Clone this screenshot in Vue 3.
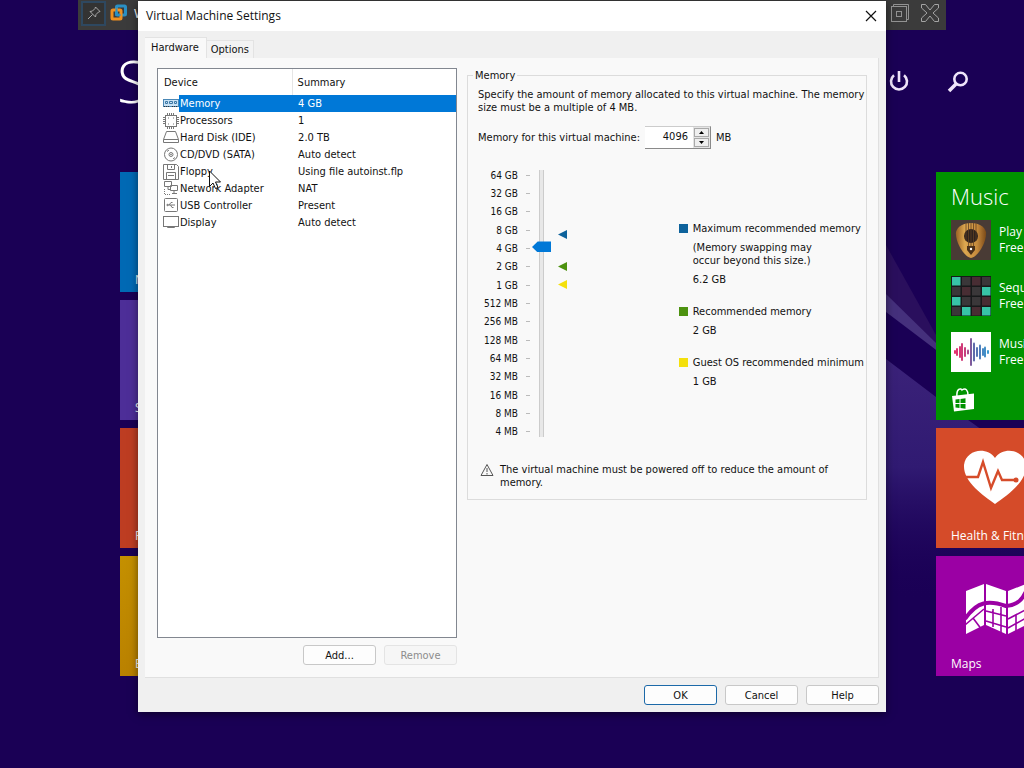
<script setup>
import { ref, computed } from 'vue'

const devices = [
  { id: 'memory', name: 'Memory', summary: '4 GB' },
  { id: 'cpu', name: 'Processors', summary: '1' },
  { id: 'disk', name: 'Hard Disk (IDE)', summary: '2.0 TB' },
  { id: 'cd', name: 'CD/DVD (SATA)', summary: 'Auto detect' },
  { id: 'floppy', name: 'Floppy', summary: 'Using file autoinst.flp' },
  { id: 'net', name: 'Network Adapter', summary: 'NAT' },
  { id: 'usb', name: 'USB Controller', summary: 'Present' },
  { id: 'display', name: 'Display', summary: 'Auto detect' },
]
const selected = ref('memory')

const scale = ['64 GB', '32 GB', '16 GB', '8 GB', '4 GB', '2 GB', '1 GB', '512 MB', '256 MB', '128 MB', '64 MB', '32 MB', '16 MB', '8 MB', '4 MB']

// Slider levels are powers of two in megabytes: 2 is 4 MB, 16 is 64 GB.
const level = ref(12)
const memory = computed({
  get: () => 2 ** level.value,
  set: (v) => { if (v >= 4) level.value = Math.log2(v) },
})
const step = (d) => { level.value = Math.min(16, Math.max(2, level.value + d)) }

const marks = [
  { color: 'blue', level: 12.73, title: 'Maximum recommended memory', note: '(Memory swapping may occur beyond this size.)', value: '6.2 GB' },
  { color: 'green', level: 11, title: 'Recommended memory', value: '2 GB' },
  { color: 'yellow', level: 10, title: 'Guest OS recommended minimum', value: '1 GB' },
]
const markTop = (m) => ({ top: `${((16 - m.level) / 14) * 100}%` })

const leftTiles = [
  { label: 'N', tone: 'sky' },
  { label: 'S', tone: 'violet' },
  { label: 'F', tone: 'red' },
  { label: 'E', tone: 'gold' },
]
const seqOn = [0, 7, 8, 13, 15]
const bars = [[3, 4], [5, 8], [8, 12], [10, 18], [13, 10], [16, 5], [19, 28], [22, 19], [25, 10], [28, 15], [31, 8], [33, 11], [36, 4]]
</script>

<template>
  <div class="desktop">
    <svg class="rays" viewBox="0 0 138 768" preserveAspectRatio="none" aria-hidden="true">
      <defs>
        <linearGradient id="ray" x1="0" y1="0" x2="0" y2="1">
          <stop offset="0" stop-color="#3b2279" />
          <stop offset="0.45" stop-color="#301a72" />
          <stop offset="1" stop-color="#1b0057" stop-opacity="0" />
        </linearGradient>
      </defs>
      <path d="M0 245 L50 335 L50 350 L0 300Z" fill="#2a0f5d" />
      <path d="M0 294 L50 343 L70 365 L0 312Z" fill="#45307c" />
      <path d="M0 359 L50 397 L138 460 L138 600 L0 600Z" fill="url(#ray)" />
    </svg>

    <header class="vm-bar">
      <button class="pin" aria-label="Pin">
        <svg width="16" height="16" viewBox="0 0 16 16" fill="none" stroke="#aaa"><path d="M9.500 2 L14 6.500 L12.500 7 L10 9.500 L9.500 12 L4 6.500 L6.500 6 L9 3.500Z M6.500 9.500 L2 14" /></svg>
      </button>
      <svg class="vm-logo" width="18" height="18" viewBox="0 0 18 18" fill="none" stroke-width="3">
        <rect x="6.500" y="2" width="9" height="9" rx="1" stroke="#2a90c4" />
        <rect x="2" y="6" width="9" height="9" rx="1" stroke="#f09020" />
        <path d="M6.500 4.500v6.500h4" stroke="#2a90c4" stroke-width="2" />
      </svg>
      <span class="vm-name">W</span>
      <span class="grow"></span>
      <button aria-label="Restore"><svg width="20" height="20" viewBox="0 0 20 20" fill="none" stroke="#929292"><path d="M3.500 3.500V1.500H18.500V16.500H16.500" /><rect x="1.500" y="3.500" width="15" height="15" /><rect x="6.500" y="8.500" width="5" height="5" /></svg></button>
      <button aria-label="Close console"><svg width="20" height="20" viewBox="0 0 20 20" fill="none" stroke="#a4a4a4"><path d="M1.500 1.500H5.500L10 7 L14.500 1.500H18.500V5L13 10 L18.500 15V18.500H14.500L10 13 L5.500 18.500H1.500V15L7 10 L1.500 5Z" /></svg></button>
    </header>

    <h1 class="start">S</h1>
    <nav class="start-tools">
      <button aria-label="Power"><svg width="22" height="24" viewBox="0 0 22 24" fill="none" stroke="#efe4fa" stroke-width="2.600"><path d="M6 5.200A8 8 0 1 0 16 5.200M11 1V12" /></svg></button>
      <button aria-label="Search"><svg width="22" height="24" viewBox="0 0 22 24" fill="none" stroke="#efe4fa" stroke-width="2.600"><circle cx="13.500" cy="9" r="6.200" /><path d="M9 14L2 21" stroke-width="3.500" /></svg></button>
    </nav>

    <div class="tiles">
      <div class="tile-col">
        <a v-for="t in leftTiles" :key="t.label" href="#" class="tile" :class="t.tone">{{ t.label }}</a>
      </div>
      <div class="tile-col right">
        <section class="tile music">
          <h2>Music</h2>
          <a class="song" href="#">
            <svg width="40" height="40" viewBox="0 0 40 40">
              <defs><linearGradient id="wood"><stop stop-color="#9a6225" /><stop offset=".3" stop-color="#dda850" /><stop offset=".7" stop-color="#c58a3c" /><stop offset="1" stop-color="#7b4a18" /></linearGradient></defs>
              <rect width="40" height="40" fill="#493b35" />
              <path d="M5 12C8 0 32 0 35 12C36 22 27 37 20 38C13 37 4 22 5 12Z" fill="url(#wood)" />
              <circle cx="20" cy="16" r="7" fill="#2e221d" />
              <path d="M15 3V21M17.500 3V26M20 3V28M22.500 3V26M25 3V21" stroke="#604022" stroke-width=".8" />
              <path d="M16 26h8v4l-4 5l-4-5z" fill="#493018" /><circle cx="20" cy="29" r="1.200" fill="#fff" />
            </svg>
            <span>Play<br>Free</span>
          </a>
          <a class="song" href="#">
            <svg width="40" height="40" viewBox="0 0 40 40">
              <rect width="40" height="40" fill="#17191a" />
              <rect v-for="n in 16" :key="n" :x="((n - 1) % 4) * 10 + 1" :y="Math.floor((n - 1) / 4) * 10 + 1" width="8.500" height="8.500" :fill="seqOn.includes(n - 1) ? '#37c3a6' : n % 3 ? '#3a3739' : '#482d33'" />
            </svg>
            <span>Sequ<br>Free</span>
          </a>
          <a class="song" href="#">
            <svg width="40" height="40" viewBox="0 0 40 40">
              <defs><linearGradient id="wave" gradientUnits="userSpaceOnUse" x1="0" y1="0" x2="40" y2="0"><stop stop-color="#f02c68" /><stop offset=".38" stop-color="#c4407f" /><stop offset=".55" stop-color="#6167a8" /><stop offset="1" stop-color="#35a3d7" /></linearGradient></defs>
              <rect width="40" height="40" fill="#fff" />
              <rect v-for="b in bars" :key="b[0]" :x="b[0]" :y="20 - b[1] / 2" width="2" :height="b[1]" rx="1" fill="url(#wave)" />
            </svg>
            <span>Musi<br>Free</span>
          </a>
          <svg class="store" width="24" height="26" viewBox="0 0 24 26">
            <path d="M6 9C5 0 10 0 11 2C15 -1 17 3 17 7" fill="none" stroke="#fff" stroke-width="1.500" />
            <path d="M1 8L23 5.500V21L3 23.500Z" fill="#fff" />
            <path d="M4.500 11.500L8.500 11V15H4.500ZM9.500 10.900L14.500 10.300V15H9.500ZM4.500 16H8.500V20L4.500 19.500ZM9.500 16H14.500V20.700L9.500 20.100Z" fill="#009300" />
          </svg>
        </section>
        <a href="#" class="tile health">
          <svg width="66" height="56" viewBox="0 0 66 56">
            <path d="M32 55C20 46 0 33 1 16C3 0 24-3 32 9C40-3 61 0 63 16C64 33 44 46 32 55Z" fill="#fff" />
            <path d="M1 28H15L20 13L28 39L35 22L39 31H52" fill="none" stroke="#d64c2a" stroke-width="2.400" /><circle cx="53" cy="31" r="2.500" fill="#d64c2a" />
          </svg>
          <span>Health &amp; Fitness</span>
        </a>
        <a href="#" class="tile maps">
          <svg width="84" height="52" viewBox="0 0 84 52">
            <path d="M1 8L19 1V42L1 51ZM21 1L41 8V51L21 42ZM43 8L61 1V42L43 51ZM63 1L83 8V51L63 42Z" fill="#fff" />
            <g fill="none" stroke="#9b00a4"><path d="M0 36C12 18 24 17 41 23C53 22 58 16 62 6" stroke-width="4" /><path d="M0 42L19 26M8 35L17 47M21 28L41 33M21 38L41 44M36 24V50M28 26V44M43 36L62 26M43 45L61 35M51 32V48" stroke-width="1.600" /></g>
          </svg>
          <span>Maps</span>
        </a>
      </div>
    </div>

    <main class="window" role="dialog" aria-labelledby="dlg-title">
      <div class="titlebar">
        <h2 id="dlg-title">Virtual Machine Settings</h2>
        <button aria-label="Close"><svg width="12" height="12" viewBox="0 0 12 12" fill="none" stroke="#111" stroke-width="1.200"><path d="M1 1L11 11M11 1L1 11" /></svg></button>
      </div>
      <div class="body">
        <div class="tabs" role="tablist">
          <button role="tab" aria-selected="true" class="tab active">Hardware</button>
          <button role="tab" aria-selected="false" class="tab">Options</button>
        </div>
        <div class="page">
          <section class="left">
            <div class="list">
              <table>
                <thead><tr><th class="dev">Device</th><th>Summary</th></tr></thead>
                <tbody>
                  <tr v-for="d in devices" :key="d.id" :class="{ selected: selected === d.id }" @click="selected = d.id">
                    <td>
                      <div class="cell">
                        <svg class="icon" width="16" height="16" viewBox="0 0 16 16" fill="none" stroke="#777">
                          <template v-if="d.id === 'memory'"><rect x=".5" y="3.500" width="15" height="7" fill="#c8e2f5" stroke="#4a87b5" /><path d="M2.500 5.500h2v2h-2zM6.500 5.500h3v2h-3zM11.500 5.500h2v2h-2z" stroke="#3c78a6" /><path d="M1 10.500H7M9 10.500H15" stroke="#333" stroke-dasharray="1 1" /></template>
                          <template v-else-if="d.id === 'cpu'"><rect x="2.500" y="2.500" width="11" height="11" /><path d="M4.500 0v2M6.500 0v2M8.500 0v2M10.500 0v2M4.500 14v2M6.500 14v2M8.500 14v2M10.500 14v2M0 4.500h2M0 6.500h2M0 8.500h2M0 10.500h2M14 4.500h2M14 6.500h2M14 8.500h2M14 10.500h2" /><path d="M5 5h1M10 5h1M5 11h1M10 11h1" /></template>
                          <template v-else-if="d.id === 'disk'"><path d="M3.500 1.500H12.500L15.500 9.500V12.500H.5V9.500ZM.5 9.500H15.500" /></template>
                          <template v-else-if="d.id === 'cd'"><circle cx="8" cy="7.500" r="6.500" /><circle cx="8" cy="7.500" r="2" /><circle cx="8" cy="7.500" r=".5" /><path d="M4 4.500L6 3M10 12L12 10.500" /></template>
                          <template v-else-if="d.id === 'floppy'"><path d="M.5.5H13.500L15.500 2.500V15.500H.5ZM4.500.5V5.500H11.500V.5M8.500 2V4M3.500 15.500V8.500H12.500V15.500M5 11.500H11" /></template>
                          <template v-else-if="d.id === 'net'"><path d="M1.500.5H8.500V5.500H1.500ZM7.500 4.500H14.500V9.500H7.500ZM5 6V8.500H7M11 10V12.500M9 12.500H14" /><path d="M1.500 8V13.500H8" stroke-dasharray="1 1" /></template>
                          <template v-else-if="d.id === 'usb'"><rect x="1.500" y=".5" width="13" height="13" rx="1" /><path d="M4 7H12M6 7L8 4.500H9.500M7.500 7L9 9.500H10.500" /><circle cx="4.500" cy="7" r=".7" /></template>
                          <template v-else><rect x=".5" y="1.500" width="15" height="10" /><path d="M4.500 12V12.500H11.500V12" /></template>
                        </svg>
                        <span>{{ d.name }}</span>
                      </div>
                    </td>
                    <td class="sum">{{ d.summary }}</td>
                  </tr>
                </tbody>
              </table>
            </div>
            <div class="actions">
              <button class="btn">Add...</button>
              <button class="btn" disabled>Remove</button>
            </div>
          </section>

          <fieldset class="memory">
            <legend>Memory</legend>
            <p>Specify the amount of memory allocated to this virtual machine. The memory size must be a multiple of 4 MB.</p>
            <div class="amount">
              <label for="mem">Memory for this virtual machine:</label>
              <div class="spin">
                <input id="mem" v-model.number="memory" type="text">
                <div class="spin-btns">
                  <button aria-label="Increase" @click="step(1)"><svg width="5" height="3" viewBox="0 0 5 3"><path d="M0 3L2.500 0L5 3Z" /></svg></button>
                  <button aria-label="Decrease" @click="step(-1)"><svg width="5" height="3" viewBox="0 0 5 3"><path d="M0 0L2.500 3L5 0Z" /></svg></button>
                </div>
              </div>
              <span>MB</span>
            </div>
            <div class="chart">
              <ol class="scale"><li v-for="s in scale" :key="s">{{ s }}</li></ol>
              <input v-model.number="level" class="slider" type="range" min="2" max="16" aria-label="Memory size">
              <div class="markers">
                <svg v-for="m in marks" :key="m.color" :class="m.color" :style="markTop(m)" width="9" height="9" viewBox="0 0 9 9"><path d="M0 4.500L9 0V9Z" fill="currentColor" /></svg>
              </div>
              <dl class="legend">
                <div v-for="m in marks" :key="m.color">
                  <dt><i :class="m.color"></i>{{ m.title }}</dt>
                  <dd v-if="m.note" class="note">{{ m.note }}</dd>
                  <dd>{{ m.value }}</dd>
                </div>
              </dl>
            </div>
            <div class="warning">
              <svg width="14" height="14" viewBox="0 0 14 14" fill="none" stroke="#555"><path d="M7 1.500L13 12.500H1Z" /><path d="M7 5V9M7 10V11.500" /></svg>
              <p>The virtual machine must be powered off to reduce the amount of memory.</p>
            </div>
          </fieldset>
        </div>
        <footer>
          <button class="btn primary">OK</button>
          <button class="btn">Cancel</button>
          <button class="btn">Help</button>
        </footer>
      </div>
    </main>

    <svg class="cursor" width="12" height="20" viewBox="0 0 12 20" aria-hidden="true"><path d="M.5 1V16.500L4 13L6.500 18.500L9 17.500L6.500 12H11.500Z" fill="#fff" stroke="#111" /></svg>
  </div>
</template>

<style>
body { margin: 0; }
</style>

<style scoped>
* { box-sizing: border-box; }
.desktop {
  position: relative;
  min-height: 100vh;
  overflow: hidden;
  background: #1a0055;
  color: #fff;
  font: 12px "Open Sans", "Noto Sans", sans-serif;
}
button { font: inherit; color: inherit; background: none; border: 0; padding: 0; }
svg { display: block; flex: none; }
h1, h2, p, dl, dd, ol { margin: 0; padding: 0; font-weight: 400; }
a { color: inherit; text-decoration: none; }
.grow { flex: 1; }
.rays { position: absolute; right: 0; top: 0; width: 138px; height: 768px; }

.vm-bar {
  position: relative;
  display: flex;
  align-items: center;
  gap: 10px;
  height: 30px;
  margin: 0 78px;
  padding: 0 6px 4px 3px;
  background: #3b3b3b;
}
.pin { display: grid; place-items: center; width: 25px; height: 25px; border: 2px solid #2e4860; background: #333; }
.vm-logo { margin-left: -6px; }
.vm-name { margin-left: -4px; font-size: 13px; }

.start { position: absolute; left: 117px; top: 46px; font-size: 58px; line-height: 70px; font-weight: 300; }
.start-tools { position: absolute; right: 55px; top: 70px; display: flex; gap: 37px; }

.tiles { position: relative; display: flex; justify-content: space-between; margin-top: 142px; padding-left: 120px; }
.tile-col { display: flex; flex-direction: column; gap: 8px; width: 248px; }
.right { width: 88px; }
.tile { position: relative; display: flex; align-items: flex-end; height: 120px; padding: 0 0 4px 15px; line-height: 17px; white-space: nowrap; overflow: hidden; }
.sky { background: #0069b4; }
.violet { background: #4d2e98; }
.red { background: #bd3d22; }
.gold { background: linear-gradient(160deg, #c49000, #b27600); }
.music { display: flex; flex-direction: column; align-items: flex-start; gap: 16px; height: 248px; padding: 8px 0 0 15px; background: #009300; }
.music h2 { font-size: 22px; line-height: 32px; font-weight: 300; margin-bottom: -8px; }
.song { display: flex; align-items: center; gap: 8px; line-height: 16px; }
.health, .maps { flex-direction: column; align-items: flex-start; justify-content: space-between; }
.health { background: #d54b29; padding-top: 21px; }
.maps { background: #9b00a4; padding-top: 27px; }
.health svg { margin-left: 12px; }
.maps svg { margin-left: 14px; }

.window {
  position: absolute;
  inset: 1px 138px 56px 138px;
  min-height: 640px;
  display: flex;
  flex-direction: column;
  background: #f0f0f0;
  color: #111;
  box-shadow: 0 2px 8px rgba(0, 0, 0, 0.5);
  font: 11px/13px "DejaVu Sans Condensed", "Noto Sans", sans-serif;
}
.titlebar { display: flex; align-items: center; justify-content: space-between; height: 30px; padding: 0 9px 0 8px; background: #fff; }
.titlebar h2 { font: 12px/16px "Open Sans", "Noto Sans", sans-serif; }
.body { flex: 1; display: flex; flex-direction: column; padding: 6px 7px 7px; }
.tabs { display: flex; align-items: flex-end; }
.tab { height: 18px; padding: 0 4px; background: #f3f3f3; border: solid #e3e3e3; border-width: 1px 1px 0 0; }
.active { height: 21px; padding: 0 7px 2px 6px; background: #f9f9f9; }
.page { flex: 1; display: grid; grid-template-columns: 300fr 400fr; gap: 10px; padding: 10px 11px 12px 12px; background: #f9f9f9; border: solid #e0e0e0; border-width: 0 1px 1px 0; }
.left { display: flex; flex-direction: column; gap: 7px; }
.list { flex: 1; background: #fff; border: 1px solid #828790; }
table { width: 100%; border-collapse: collapse; table-layout: fixed; }
th, td { padding: 0; font-weight: 400; text-align: left; white-space: nowrap; }
th { height: 26px; padding-left: 5px; }
.dev { width: 45%; padding-left: 6px; border-right: 1px solid #e5e5e5; }
td { height: 17px; }
.sum { padding-left: 6px; }
.cell { display: flex; align-items: center; padding-left: 5px; }
.cell span { flex: 1; padding-left: 1px; line-height: 17px; }
.icon { height: 16px; }
.selected .sum, .selected .cell span { background: #0078d7; color: #fff; }
.actions { display: flex; justify-content: flex-end; gap: 8px; }
.btn { width: 73px; height: 20px; background: #fdfdfd; border: 1px solid #c8c8c8; border-radius: 3px; }
.btn:disabled { color: #8c8c8c; background: #f6f6f6; border-color: #e4e4e4; }
.primary { border-color: #1c69a8; }

.memory { min-width: 0; align-self: start; margin: 1px 0 0; padding: 6px 0 10px 10px; border: 1px solid #dcdcdc; }
legend { margin-left: -5px; padding: 0 2px; }
.amount { display: flex; align-items: center; gap: 5px; margin-top: 12px; }
.spin { display: flex; width: 66px; height: 23px; background: #fff; border: solid #8a8a8a; border-width: 1px 1px 1px 0; border-top-color: #ccc; }
.spin input { flex: 1; min-width: 0; padding: 0 5px 3px 0; border: 0; background: none; font: inherit; color: inherit; text-align: right; outline: 0; }
.spin-btns { display: grid; grid-template-rows: 1fr 1fr; gap: 1px; width: 17px; padding: 1px; background: #e4e4e4; }
.spin-btns button { display: grid; place-items: center; background: #efefef; border: 1px solid #a9a9a9; }
.chart { display: flex; height: 275px; margin-top: 17px; }
.scale { display: grid; grid-template-rows: repeat(15, 1fr); width: 52px; list-style: none; font-size: 10px; }
.scale li { display: flex; align-items: center; justify-content: flex-end; gap: 8px; }
.scale li::after { content: ""; width: 4px; height: 1px; background: #bbb; }
.slider {
  appearance: none;
  writing-mode: vertical-lr;
  direction: rtl;
  width: 19px;
  height: 275px;
  margin: 0 0 0 2px;
  background: linear-gradient(90deg, #ccc 1px, #e8e8e8 1px, #e8e8e8 4px, #ccc 4px) center / 5px 267px no-repeat;
}
.slider::-webkit-slider-thumb { appearance: none; width: 19px; height: 11px; background: #0078d7; clip-path: polygon(0 50%, 30% 0, 100% 0, 100% 100%, 30% 100%); }
.markers { position: relative; width: 9px; margin: 4px 0 14px 7px; }
.markers svg { position: absolute; left: 0; }
.blue { color: #0e639c; }
.green { color: #4d9210; }
.yellow { color: #f4e00c; }
.legend { display: flex; flex-direction: column; gap: 19px; margin: 56px 2px 0 auto; white-space: nowrap; }
.legend dt { display: flex; align-items: center; gap: 5px; }
.legend i { flex: none; width: 9px; height: 9px; background: currentColor; }
.legend dd { margin: 6px 0 0 14px; }
.legend .note { width: 130px; white-space: normal; }
.warning { display: flex; gap: 6px; margin-top: 22px; padding-left: 2px; }
.warning p { max-width: 340px; }
footer { display: flex; justify-content: flex-end; gap: 8px; padding-top: 7px; }
.cursor { position: absolute; left: 209px; top: 170px; }
</style>
